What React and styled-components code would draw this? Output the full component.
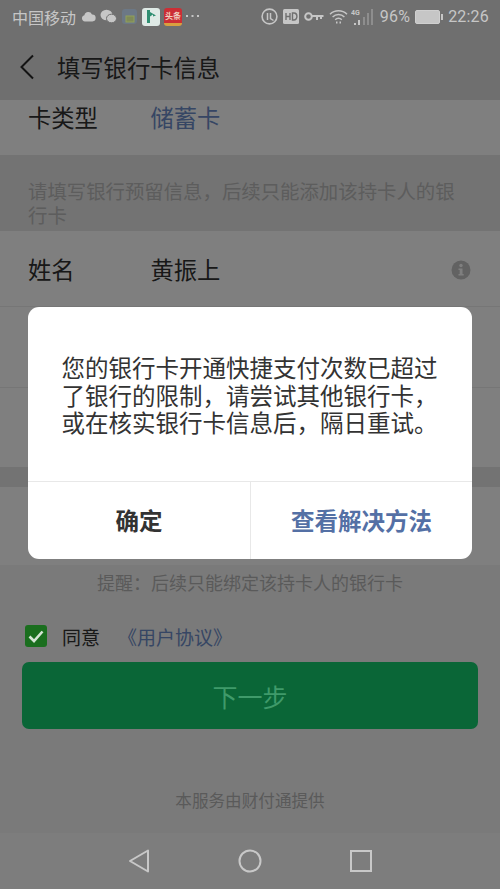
import React from 'react';
import styled, {createGlobalStyle} from 'styled-components';

const cjk = '"Noto Sans CJK SC", "Noto Sans", sans-serif';

const GlobalStyle = createGlobalStyle`
  html, body {
    margin: 0;
    padding: 0;
    background: #7a7a7a;
  }
  * {
    box-sizing: border-box;
  }
`;

const Phone = styled.div`
  width: 500px;
  height: 889px;
  display: flex;
  flex-direction: column;
  overflow: hidden;
  font-family: ${cjk};
`;

const StatusBar = styled.div`
  height: 36px;
  flex: none;
  display: flex;
  align-items: center;
  justify-content: space-between;
  padding: 0 11px 3px 12px;
  background: #6f6f6f;
  color: #c6c6c6;
`;

const StatusGroup = styled.div`
  display: flex;
  align-items: center;
  gap: ${p => p.$gap || 4}px;
`;

const Carrier = styled.span`
  font-size: 16px;
  line-height: 20px;
  width: 65px;
  white-space: nowrap;
`;

const StatusText = styled.span`
  font-family: Roboto, "Liberation Sans", sans-serif;
  font-size: 16px;
  line-height: 20px;
  letter-spacing: 0.2px;
`;

const SignalSlot = styled.span`
  display: flex;
  margin-left: -2px;
`;

const AppTile = styled.span`
  width: 18px;
  height: 18px;
  border-radius: 3px;
  background: ${p => p.$bg};
  border-bottom: ${p => (p.$stripe ? `3px solid ${p.$stripe}` : 'none')};
  display: flex;
  align-items: center;
  justify-content: center;
  overflow: hidden;
  color: #f0d0c0;
  font-size: 8px;
  font-weight: 700;
  line-height: 9px;
  white-space: nowrap;
`;

const Screen = styled.div`
  position: relative;
  flex: 1;
  display: flex;
  flex-direction: column;
  min-height: 0;
  background: #f4f4f4;
`;

const Header = styled.div`
  height: 64px;
  flex: none;
  display: flex;
  align-items: center;
  padding: 0 0 2px 19px;
  background: #dedede;
  color: #303030;
  font-size: 23.3px;
  position: relative;
  z-index: 1;
`;

const BackButton = styled.span`
  width: 38px;
  height: 28px;
  display: flex;
  align-items: center;
`;

const Scroll = styled.div`
  flex: 1;
  min-height: 0;
  overflow: hidden;
`;

const List = styled.div`
  margin-top: -21px;
`;

const Row = styled.div`
  height: ${p => p.$height || 78}px;
  display: flex;
  align-items: center;
  padding: 0 28px;
  background: #fff;
  font-size: 23.3px;
  color: #303030;
  border-bottom: ${p => (p.$line ? '1px solid #ececec' : 'none')};
`;

const RowLabel = styled.span`
  width: 122.5px;
  flex: none;
`;

const RowValue = styled.span`
  flex: 1;
  color: ${p => (p.$link ? '#6c8cc8' : '#303030')};
`;

const InfoSlot = styled.span`
  display: flex;
  margin: 0 1px 0 0;
  padding-top: 2px;
`;

const Band = styled.div`
  height: ${p => p.$height}px;
  background: #e6e6e6;
`;

const HintBand = styled(Band)`
  padding: 24px 28px 0;
  color: #bababa;
  font-size: 19.4px;
  line-height: 24px;
`;

const Reminder = styled.div`
  margin-top: 5px;
  height: 24px;
  text-align: center;
  color: #b4b4b4;
  font-size: 18px;
  line-height: 24px;
`;

const Agree = styled.div`
  margin-top: 30px;
  height: 24px;
  display: flex;
  align-items: center;
  padding-left: 25px;
  font-size: 19px;
  color: #303030;
`;

const Check = styled.span`
  position: relative;
  z-index: 3;
  width: 22px;
  height: 22px;
  flex: none;
  margin-right: 15px;
  border-radius: 3px;
  background: #1a6e1e;
  display: flex;
  align-items: center;
  justify-content: center;
`;

const AgreeLink = styled.span`
  margin-left: 18px;
  color: #6c8cc8;
  font-size: 19px;
`;

const NextButton = styled.div`
  position: relative;
  z-index: 3;
  margin: 14px 22px 0;
  height: 67px;
  border-radius: 7px;
  background: #0a6637;
  color: #3f9a6a;
  font-size: 25px;
  display: flex;
  align-items: center;
  justify-content: center;
`;

const Footer = styled.div`
  margin-top: 59px;
  text-align: center;
  font-size: 16.6px;
  line-height: 24px;
  color: #b4b4b4;
`;

const Scrim = styled.div`
  position: absolute;
  inset: 0;
  z-index: 2;
  background: rgba(0, 0, 0, 0.5);
  display: flex;
  align-items: center;
  justify-content: center;
  padding-bottom: 3px;
`;

const Dialog = styled.div`
  width: 444px;
  height: 252px;
  border-radius: 11px;
  background: #fff;
  display: flex;
  flex-direction: column;
  overflow: hidden;
`;

const Message = styled.div`
  height: 175px;
  flex: none;
  padding: 47px 30px 0 33.5px;
  color: #333;
  font-size: 23.5px;
  line-height: 27.5px;
  border-bottom: 1px solid #e8e8e8;
`;

const Actions = styled.div`
  flex: 1;
  display: grid;
  grid-template-columns: 222px 222px;
`;

const Action = styled.div`
  display: flex;
  align-items: center;
  justify-content: center;
  font-size: 23.5px;
  font-weight: 700;
  color: ${p => (p.$link ? '#5470a5' : '#333')};
  border-left: ${p => (p.$link ? '1px solid #e8e8e8' : 'none')};
  padding-bottom: 2px;
`;

const NavBar = styled.div`
  height: 56px;
  flex: none;
  display: grid;
  grid-template-columns: repeat(3, 111px);
  justify-content: center;
  align-items: center;
  justify-items: center;
  background: #7d7d7d;
`;

const CloudIcon = () => (
  <svg width="15" height="11" viewBox="0 0 15 11"><path d="M4 10.5a3.2 3.2 0 0 1-.6-6.3A4 4 0 0 1 11 3.6a3.4 3.4 0 0 1 .4 6.9z" fill="#c6c6c6"/></svg>
);

const WechatIcon = () => (
  <svg width="17" height="15" viewBox="0 0 17 15">
    <ellipse cx="6.5" cy="6" rx="6" ry="5.2" fill="#c6c6c6"/>
    <ellipse cx="11.5" cy="9.5" rx="5" ry="4.3" fill="#c6c6c6" stroke="#6f6f6f"/>
  </svg>
);

const FadedAppIcon = () => (
  <svg width="17" height="17" viewBox="0 0 17 17">
    <rect x="1" y="1" width="15" height="15" rx="3" fill="#6c7886"/>
    <rect x="5" y="8" width="8" height="6" fill="#7f8a58" stroke="#92a05a"/>
  </svg>
);

const FlagIcon = () => (
  <svg width="11" height="13" viewBox="0 0 11 13"><path d="M1 0h3v2l6 3.5-3 1V4.5L4 6.5V13H1z" fill="#2f8f72"/></svg>
);

const ClockIcon = () => (
  <svg width="17" height="17" viewBox="0 0 17 17" fill="none" stroke="#c6c6c6">
    <circle cx="8.5" cy="8.5" r="7.4" strokeWidth="1.6"/>
    <path d="M6.5 5v7M9.5 5v5.5l3 2" strokeWidth="1.5"/>
  </svg>
);

const HdIcon = () => (
  <svg width="16" height="15" viewBox="0 0 16 15">
    <rect width="16" height="15" rx="1.5" fill="#c6c6c6"/>
    <path d="M3 4v7M7 4v7M3 7.5h4M9.5 4v7h1.5a2.5 3 0 0 0 0-7z" fill="none" stroke="#6f6f6f" strokeWidth="1.4"/>
  </svg>
);

const KeyIcon = () => (
  <svg width="20" height="11" viewBox="0 0 20 11" fill="none" stroke="#c6c6c6" strokeWidth="2">
    <circle cx="4.5" cy="5.5" r="3.3"/>
    <path d="M8 5h11.5M13 5v4M17 5v3"/>
  </svg>
);

const WifiIcon = () => (
  <svg width="19" height="15" viewBox="0 0 19 15" fill="none" stroke="#c6c6c6" strokeWidth="1.5">
    <path d="M1 5.2a12 12 0 0 1 17 0M3.6 8a8.4 8.4 0 0 1 11.8 0M6.2 10.7a4.6 4.6 0 0 1 6.6 0"/>
    <path d="M7 13.5h1.5M10.5 13.5H12" strokeWidth="2"/>
  </svg>
);

const SignalIcon = () => (
  <svg width="24" height="18" viewBox="0 0 24 18">
    <text x="0" y="7" fontSize="7" fontWeight="700" fontFamily="Roboto, sans-serif" fill="#c6c6c6">4G</text>
    <path d="M3 15h2v2H3zM7 12h2v5H7z" fill="#c6c6c6"/>
    <path d="M12 9h2v8h-2zM16 5h2v12h-2zM20 1h2v16h-2z" fill="#8e8e8e"/>
  </svg>
);

const BatteryIcon = () => (
  <svg width="28" height="14" viewBox="0 0 28 14">
    <rect x="0.5" y="0.5" width="24" height="13" rx="1.5" fill="#c6c6c6" stroke="#d0d0d0"/>
    <rect x="26" y="4" width="2" height="6" fill="#c6c6c6"/>
  </svg>
);

const BackArrow = () => (
  <svg width="16" height="26" viewBox="0 0 16 26" fill="none" stroke="#262626" strokeWidth="2">
    <path d="M14 1.5 2.5 13 14 24.5"/>
  </svg>
);

const InfoIcon = () => (
  <svg width="20" height="20" viewBox="0 0 20 20">
    <circle cx="10" cy="10" r="9.5" fill="#c4c4c4"/>
    <circle cx="10" cy="5.5" r="1.7" fill="#fff"/>
    <path d="M7.5 8.5h4V14h1.2v1.5H7.5V14h1.2V10H7.5z" fill="#fff"/>
  </svg>
);

const CheckMark = () => (
  <svg width="16" height="13" viewBox="0 0 16 13" fill="none" stroke="#d5e5d5" strokeWidth="2.6">
    <path d="M1.5 6.5 6 11l8.5-9.5"/>
  </svg>
);

const NavBack = () => (
  <svg width="22" height="24" viewBox="0 0 22 24" fill="none" stroke="#c8c8c8" strokeWidth="2">
    <path d="M20 1.5v21L2 12z" strokeLinejoin="round"/>
  </svg>
);

const NavHome = () => (
  <svg width="24" height="24" viewBox="0 0 24 24" fill="none" stroke="#c8c8c8" strokeWidth="2">
    <circle cx="12" cy="12" r="10.5"/>
  </svg>
);

const NavRecent = () => (
  <svg width="22" height="22" viewBox="0 0 22 22" fill="none" stroke="#c8c8c8" strokeWidth="2">
    <rect x="1" y="1" width="20" height="20"/>
  </svg>
);

const Dots = () => (
  <svg width="13" height="3" viewBox="0 0 13 3"><path d="M0 0h2v2H0zM5.5 0h2v2h-2zM11 0h2v2h-2z" fill="#c6c6c6"/></svg>
);

const App = () => {
  return (
    <Phone>
      <GlobalStyle/>
      <StatusBar>
        <StatusGroup $gap={4}>
          <Carrier>中国移动</Carrier>
          <CloudIcon/>
          <WechatIcon/>
          <FadedAppIcon/>
          <AppTile $bg="#dfeae6"><FlagIcon/></AppTile>
          <AppTile $bg="#cc2e35" $stripe="#d8a040">头条</AppTile>
          <Dots/>
        </StatusGroup>
        <StatusGroup $gap={5}>
          <ClockIcon/>
          <HdIcon/>
          <KeyIcon/>
          <WifiIcon/>
          <SignalSlot><SignalIcon/></SignalSlot>
          <StatusText>96%</StatusText>
          <BatteryIcon/>
          <StatusText>22:26</StatusText>
        </StatusGroup>
      </StatusBar>
      <Screen>
        <Header>
          <BackButton><BackArrow/></BackButton>
          填写银行卡信息
        </Header>
        <Scroll>
          <List>
            <Row $height={76}>
              <RowLabel>卡类型</RowLabel>
              <RowValue $link>储蓄卡</RowValue>
            </Row>
            <HintBand $height={76}>请填写银行预留信息，后续只能添加该持卡人的银行卡</HintBand>
            <Row $height={76} $line>
              <RowLabel>姓名</RowLabel>
              <RowValue>黄振上</RowValue>
              <InfoSlot><InfoIcon/></InfoSlot>
            </Row>
            <Row $height={81} $line/>
            <Row $height={79}/>
            <Band $height={20}/>
            <Row/>
            <Reminder>提醒：后续只能绑定该持卡人的银行卡</Reminder>
            <Agree>
              <Check><CheckMark/></Check>
              同意
              <AgreeLink>《用户协议》</AgreeLink>
            </Agree>
            <NextButton>下一步</NextButton>
            <Footer>本服务由财付通提供</Footer>
          </List>
        </Scroll>
        <Scrim>
          <Dialog>
            <Message>您的银行卡开通快捷支付次数已超过了银行的限制，请尝试其他银行卡，或在核实银行卡信息后，隔日重试。</Message>
            <Actions>
              <Action>确定</Action>
              <Action $link>查看解决方法</Action>
            </Actions>
          </Dialog>
        </Scrim>
      </Screen>
      <NavBar>
        <NavBack/>
        <NavHome/>
        <NavRecent/>
      </NavBar>
    </Phone>
  );
};

export default App;
